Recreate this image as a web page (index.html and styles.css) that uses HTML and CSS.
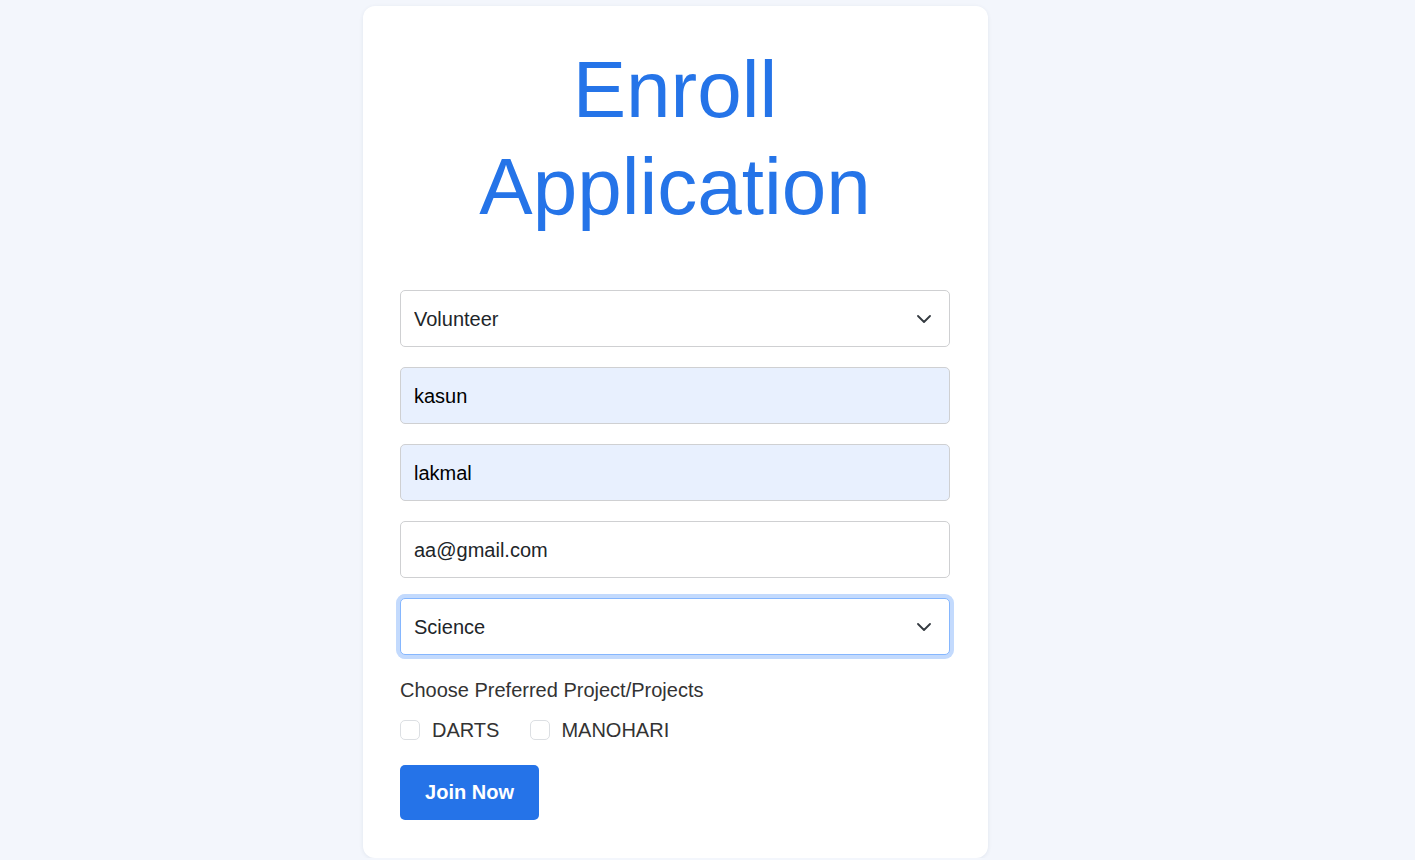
FILE: index.html
```html
<!DOCTYPE html>
<html lang="en">
<head>
<meta charset="utf-8">
<title>Enroll Application</title>
<link rel="stylesheet" href="styles.css">
</head>
<body>
<main class="page">
  <form class="card">
    <h1 class="title">Enroll Application</h1>
    <div class="fields">
      <div class="select-wrap">
        <select class="field">
          <option>Volunteer</option>
        </select>
        <svg class="chev" width="14" height="8" viewBox="0 0 14 8"><path d="M1 1l6 6 6-6" fill="none" stroke="#343a40" stroke-width="1.8" stroke-linecap="round" stroke-linejoin="round"/></svg>
      </div>
      <input class="field autofill" type="text" value="kasun">
      <input class="field autofill" type="text" value="lakmal">
      <input class="field" type="email" value="aa@gmail.com">
      <div class="select-wrap">
        <select class="field focused">
          <option>Science</option>
        </select>
        <svg class="chev" width="14" height="8" viewBox="0 0 14 8"><path d="M1 1l6 6 6-6" fill="none" stroke="#343a40" stroke-width="1.8" stroke-linecap="round" stroke-linejoin="round"/></svg>
      </div>
    </div>
    <p class="label">Choose Preferred Project/Projects</p>
    <div class="checks">
      <label class="check"><input type="checkbox" class="box"><span>DARTS</span></label>
      <label class="check"><input type="checkbox" class="box"><span>MANOHARI</span></label>
    </div>
    <button type="button" class="btn">Join Now</button>
  </form>
</main>
</body>
</html>
```
FILE: styles.css
```css
html, body {
  margin: 0;
  padding: 0;
}
body {
  background: #f3f6fc;
  font-family: "Liberation Sans", Arial, sans-serif;
  color: #212529;
}
.page {
  display: flex;
  justify-content: flex-start;
  padding: 6px 0 0 363px;
}
.card {
  box-sizing: border-box;
  width: 625px;
  height: 852px;
  background: #ffffff;
  border-radius: 12px;
  box-shadow: 0 1px 4px rgba(30, 50, 90, 0.08);
  padding: 35px 38px 37px 37px;
}
.title {
  margin: 0 0 55px;
  font-weight: 400;
  font-size: 80px;
  line-height: 97px;
  color: #2574e8;
  text-align: center;
}
.fields {
  display: flex;
  flex-direction: column;
  gap: 20px;
}
.select-wrap {
  position: relative;
}
.field {
  box-sizing: border-box;
  display: block;
  width: 100%;
  height: 57px;
  margin: 0;
  padding: 1px 13px 0;
  border: 1px solid #cfd0d2;
  border-radius: 5px;
  background: #ffffff;
  font-family: "Liberation Sans", Arial, sans-serif;
  font-size: 20px;
  color: #212529;
  outline: none;
  appearance: none;
  -webkit-appearance: none;
}
.autofill {
  background: #e8f0fe;
  color: #000;
}
.focused {
  border-color: #86b7fe;
  box-shadow: 0 0 0 4px #c3dafd;
}
.chev {
  position: absolute;
  right: 19px;
  top: 25px;
  pointer-events: none;
}
.label {
  margin: 23px 0 0;
  font-size: 20px;
  line-height: 24px;
  color: #333;
}
.checks {
  display: flex;
  gap: 31px;
  margin-top: 16px;
}
.check {
  display: flex;
  align-items: center;
  gap: 12px;
  font-size: 20px;
  line-height: 24px;
  color: #333;
}
.check + .check {
  gap: 11px;
}
.box {
  appearance: none;
  -webkit-appearance: none;
  width: 20px;
  height: 20px;
  margin: 0;
  border: 1px solid #dcdfe3;
  border-radius: 5px;
  background: #fff;
}
.btn {
  display: block;
  margin-top: 23px;
  width: 139px;
  height: 55px;
  border: none;
  border-radius: 5px;
  background: #2573e8;
  color: #fff;
  font-family: "Liberation Sans", Arial, sans-serif;
  font-weight: 700;
  font-size: 20px;
}
```
